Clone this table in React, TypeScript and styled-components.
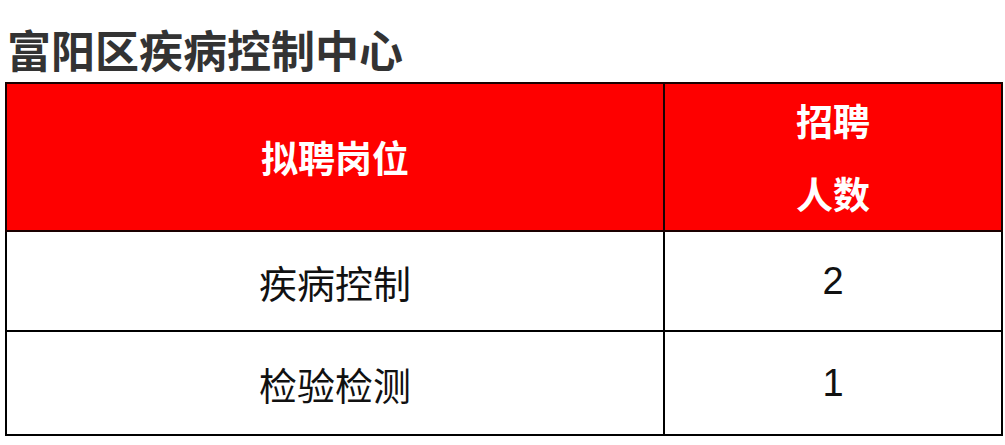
import React from "react";
import styled, { createGlobalStyle } from "styled-components";

const GlobalStyle = createGlobalStyle`
  html, body {
    margin: 0;
    padding: 0;
    background: #ffffff;
  }
  body {
    font-family: "Liberation Sans", "Noto Sans CJK SC", sans-serif;
  }
`;

let Page = styled.div`
  width: 1005px;
  height: 445px;
  padding: 0 0 0 5px;
  box-sizing: border-box;
  overflow: hidden;
`;

let Title = styled.h1`
  margin: 0 0 7px 2px;
  padding-top: 23px;
  font-family: "Noto Sans CJK SC", sans-serif;
  font-size: 44px;
  line-height: 52px;
  font-weight: 700;
  color: #333333;
`;

let Table = styled.table`
  width: 992px;
  border-collapse: collapse;
  table-layout: fixed;
`;

let HeadRow = styled.tr`
  background: #fe0000;
  height: 143px;
`;

let BodyRow = styled.tr<{ rowHeight: number }>`
  height: ${(props) => props.rowHeight}px;
`;

let HeadCell = styled.th<{ cellWidth: number }>`
  width: ${(props) => props.cellWidth}px;
  border: 2px solid #1a0000;
  padding: 0;
  text-align: center;
  vertical-align: middle;
  font-family: "Noto Sans CJK SC", sans-serif;
  font-size: 37px;
  font-weight: 700;
  line-height: 73px;
  color: #ffffff;
`;

let Cell = styled.td`
  border: 2px solid #000000;
  padding: 0;
  text-align: center;
  vertical-align: middle;
  font-family: "Liberation Sans", "Noto Sans CJK SC", sans-serif;
  font-size: 38px;
  font-weight: 400;
  color: #111111;
`;

interface IPost {
  name: string;
  count: number;
  height: number;
}

const posts: IPost[] = [
  { name: "疾病控制", count: 2, height: 100 },
  { name: "检验检测", count: 1, height: 104 },
];

let App: React.FC = () => {
  return (
    <Page>
      <GlobalStyle />
      <Title>富阳区疾病控制中心</Title>
      <Table>
        <thead>
          <HeadRow>
            <HeadCell cellWidth={656}>拟聘岗位</HeadCell>
            <HeadCell cellWidth={336}>
              招聘
              <br />
              人数
            </HeadCell>
          </HeadRow>
        </thead>
        <tbody>
          {posts.map((post) => (
            <BodyRow key={post.name} rowHeight={post.height}>
              <Cell>{post.name}</Cell>
              <Cell>{post.count}</Cell>
            </BodyRow>
          ))}
        </tbody>
      </Table>
    </Page>
  );
};

export default App;
